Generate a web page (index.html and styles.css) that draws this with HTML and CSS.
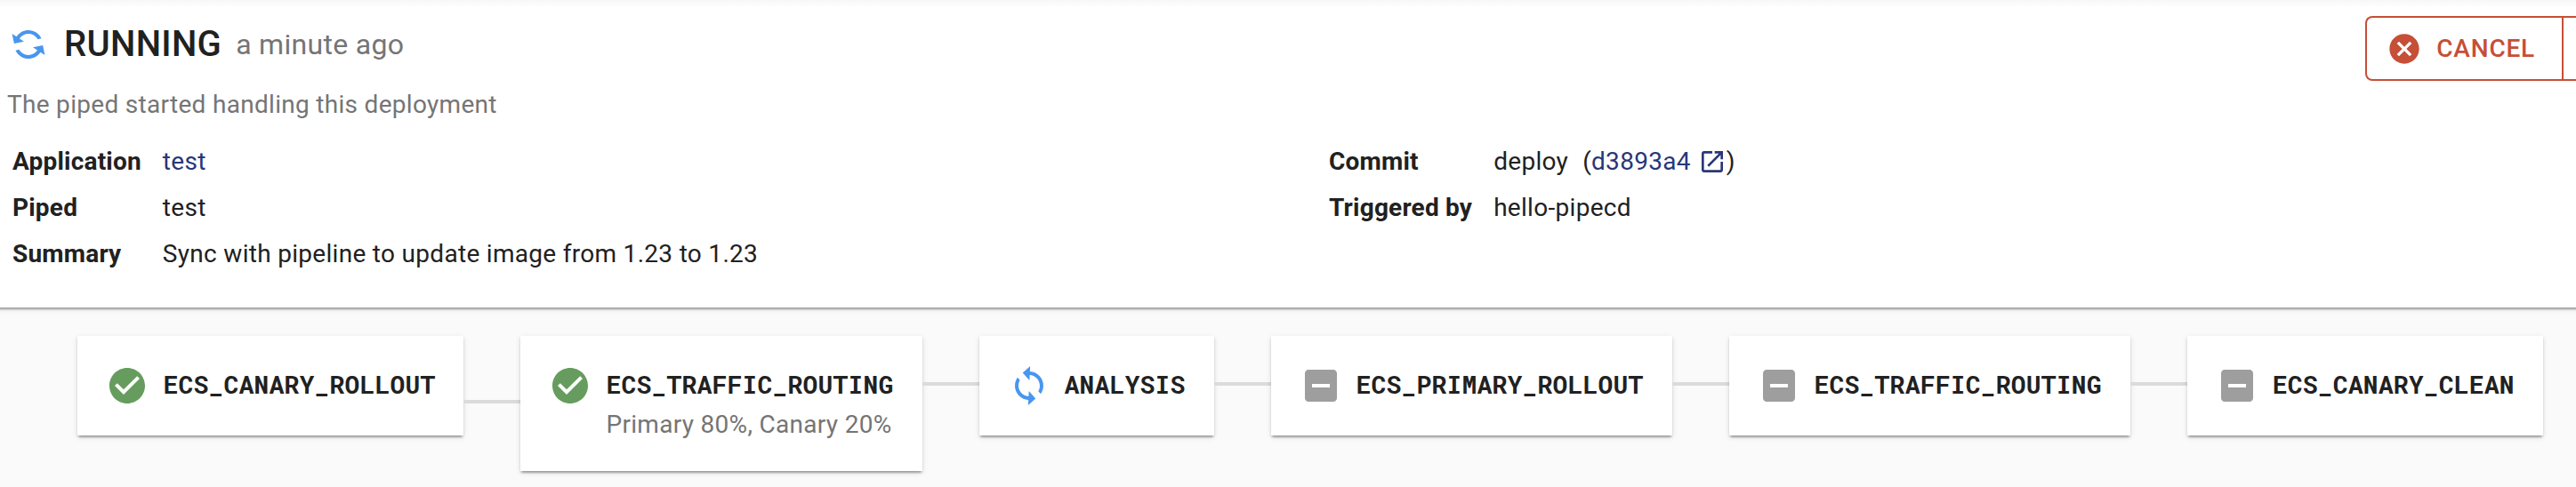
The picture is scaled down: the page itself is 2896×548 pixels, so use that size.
FILE: index.html
```
<!DOCTYPE html>
<html lang="en">
<head>
<meta charset="utf-8">
<title>Deployment</title>
<link rel="stylesheet" href="styles.css">
</head>
<body>
<svg width="0" height="0" class="sprite">
  <symbol id="sync" viewBox="0 0 24 24"><path d="M12 4V1L8 5l4 4V6c3.31 0 6 2.69 6 6 0 1.01-.25 1.97-.7 2.8l1.46 1.46C19.54 15.03 20 13.57 20 12c0-4.42-3.58-8-8-8zm0 14c-3.31 0-6-2.69-6-6 0-1.01.25-1.97.7-2.8L5.24 7.74C4.46 8.97 4 10.43 4 12c0 4.42 3.58 8 8 8v3l4-4-4-4v3z"/></symbol>
  <symbol id="check" viewBox="0 0 24 24"><path d="M12 2C6.48 2 2 6.48 2 12s4.48 10 10 10 10-4.48 10-10S17.52 2 12 2zm-2 15l-5-5 1.41-1.41L10 14.17l7.59-7.59L19 8l-9 9z"/></symbol>
  <symbol id="minus" viewBox="0 0 24 24"><path d="M19 3H5c-1.1 0-2 .9-2 2v14c0 1.1.9 2 2 2h14c1.1 0 2-.9 2-2V5c0-1.1-.9-2-2-2zm-2 10H7v-2h10v2z"/></symbol>
</svg>
<header class="panel">
  <div class="top">
    <div class="intro">
      <div class="status">
        <svg class="icon running status-icon"><use href="#sync"/></svg>
        <h1 class="title">RUNNING</h1>
        <span class="ago">a minute ago</span>
      </div>
      <p class="reason">The piped started handling this deployment</p>
    </div>
    <div class="actions">
      <button class="cancel">
        <svg class="cancel-icon" viewBox="0 0 24 24"><path d="M12 2C6.47 2 2 6.47 2 12s4.47 10 10 10 10-4.47 10-10S17.53 2 12 2zm5 13.59L15.59 17 12 13.41 8.41 17 7 15.59 10.59 12 7 8.41 8.41 7 12 10.59 15.59 7 17 8.41 13.41 12 17 15.59z"/></svg>
        <span>CANCEL</span>
      </button>
      <span class="more"></span>
    </div>
  </div>
  <div class="details">
    <dl class="facts">
      <dt>Application</dt><dd><a class="link">test</a></dd>
      <dt>Piped</dt><dd>test</dd>
      <dt>Summary</dt><dd>Sync with pipeline to update image from 1.23 to 1.23</dd>
    </dl>
    <dl class="facts">
      <dt>Commit</dt><dd class="commit"><span class="message">deploy</span>(<a class="link">d3893a4<svg class="open" viewBox="0 0 24 24"><path d="M19 19H5V5h7V3H5c-1.11 0-2 .9-2 2v14c0 1.1.89 2 2 2h14c1.1 0 2-.9 2-2v-7h-2v7zM14 3v2h3.59l-9.83 9.83 1.41 1.41L19 6.41V10h2V3h-7z"/></svg></a>)</dd>
      <dt>Triggered by</dt><dd>hello-pipecd</dd>
    </dl>
  </div>
</header>
<main class="pipeline">
  <section class="stage"><svg class="icon success"><use href="#check"/></svg><div><div class="name">ECS_CANARY_ROLLOUT</div></div></section>
  <i class="line low"></i>
  <section class="stage"><svg class="icon success"><use href="#check"/></svg><div><div class="name">ECS_TRAFFIC_ROUTING</div><div class="traffic">Primary 80%, Canary 20%</div></div></section>
  <i class="line"></i>
  <section class="stage"><svg class="icon running spin"><use href="#sync"/></svg><div><div class="name">ANALYSIS</div></div></section>
  <i class="line"></i>
  <section class="stage"><svg class="icon pending"><use href="#minus"/></svg><div><div class="name">ECS_PRIMARY_ROLLOUT</div></div></section>
  <i class="line"></i>
  <section class="stage"><svg class="icon pending"><use href="#minus"/></svg><div><div class="name">ECS_TRAFFIC_ROUTING</div></div></section>
  <i class="line"></i>
  <section class="stage"><svg class="icon pending"><use href="#minus"/></svg><div><div class="name">ECS_CANARY_CLEAN</div></div></section>
</main>
</body>
</html>
```
FILE: styles.css
```
* { box-sizing: border-box; }
body {
  margin: 0;
  height: 548px;
  overflow: hidden;
  background: #fafafa;
  color: #212121;
  font: 400 28px/40px Roboto, sans-serif;
  letter-spacing: 0.3px;
}
h1, p, dl, dd { margin: 0; }
.sprite { position: absolute; }

/* Deployment summary */
.panel {
  height: 346px;
  margin: 0 -10px;
  padding: 0 10px;
  background: linear-gradient(#f7f7f7, #fff 8px);
  box-shadow: 0 4px 2px -2px rgba(0,0,0,.2), 0 2px 2px rgba(0,0,0,.14), 0 2px 6px rgba(0,0,0,.12);
}
.top { display: flex; justify-content: space-between; height: 156px; }
.status { display: flex; align-items: center; height: 64px; margin: 18px 0 0 8px; }
.status-icon { transform: rotate(-57deg); }
.title { margin-left: 16px; font-size: 40px; line-height: 64px; font-weight: 500; letter-spacing: 0.3px; }
.ago { margin-left: 16px; font-size: 32px; line-height: 48px; color: #757575; }
.reason { margin: 16px 0 0 8px; color: #757575; }

.actions { display: flex; padding-top: 18px; }
.cancel {
  display: flex;
  align-items: center;
  height: 73px;
  padding: 0 30px;
  border: 2px solid #c64f37;
  border-right: 0;
  border-radius: 8px 0 0 8px;
  background: transparent;
  color: #c64f37;
  font: 500 28px/49px Roboto, sans-serif;
  letter-spacing: 0.8px;
}
.cancel-icon { width: 40px; height: 40px; margin: 0 16px 0 -8px; fill: currentColor; }
.more { width: 16px; height: 73px; border: 2px solid #c64f37; border-right: 0; }

.details { display: grid; grid-template-columns: 1480px 1fr; padding-left: 14px; }
.facts { display: grid; align-content: start; justify-content: start; grid-template-columns: auto auto; grid-auto-rows: 52px; line-height: 52px; column-gap: 24px; }
dt { font-weight: 700; letter-spacing: 0.2px; }
.link { display: inline-flex; align-items: center; color: #283778; }
.commit { display: flex; align-items: center; }
.message { margin-right: 16px; }
.open { width: 32px; height: 32px; margin-left: 8px; fill: currentColor; }

/* Pipeline stages */
.pipeline { display: flex; align-items: flex-start; padding: 32px 0 0 87.4px; }
.stage {
  display: flex;
  flex: none;
  min-height: 112px;
  padding: 32px;
  gap: 16px;
  background: #fff;
  box-shadow: 0 4px 2px -2px rgba(0,0,0,.2), 0 2px 2px rgba(0,0,0,.14), 0 2px 6px rgba(0,0,0,.12);
}
.name { padding-bottom: 2px; font: 700 28px/46px "Roboto Mono", "DejaVu Sans Mono", monospace; letter-spacing: 0.2px; }
.traffic { color: #757575; }
.line { flex: none; width: 64px; height: 4px; margin-top: 52px; background: #dbdbdb; }
.line.low { margin-top: 72px; }

.icon { flex: none; width: 48px; height: 48px; fill: currentColor; }
.success { color: #669c5e; }
.running { color: #4896f0; }
.pending { color: #9e9e9e; }
.spin { transform: rotate(3deg); }
```
